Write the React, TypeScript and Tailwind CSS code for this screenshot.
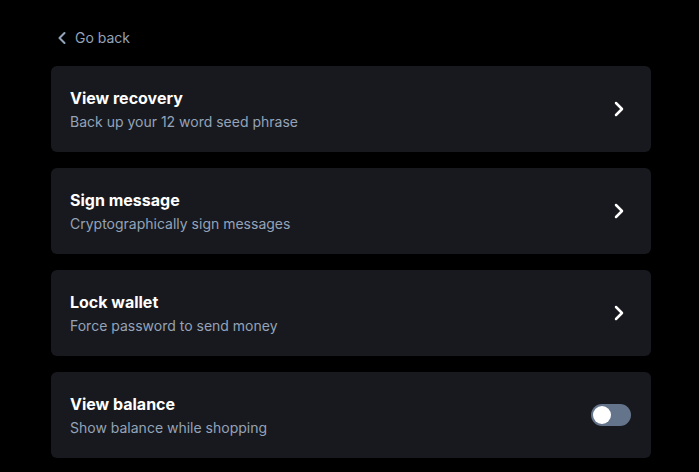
import { ChevronLeft, ChevronRight } from 'lucide-react';

const ITEMS = [
  { title: 'View recovery', description: 'Back up your 12 word seed phrase' },
  { title: 'Sign message', description: 'Cryptographically sign messages' },
  { title: 'Lock wallet', description: 'Force password to send money' },
];

function Toggle() {
  return (
    <div className="flex h-[22px] w-10 items-center rounded-full bg-[#64748b] px-[2px]">
      <div className="h-[18px] w-[18px] rounded-full bg-white" />
    </div>
  );
}

export default function App() {
  return (
    <div className="min-h-[472px] bg-black px-[51px] pt-[28px] font-['Inter',sans-serif]">
      <button className="ml-[1px] flex items-center gap-[3px] text-sm text-[#94a3b8]">
        <ChevronLeft className="h-5 w-5" strokeWidth={2.5} aria-hidden="true" />
        Go back
      </button>

      <div className="mt-[18px] flex w-[600px] flex-col gap-4">
        {ITEMS.map((item) => (
          <div key={item.title} className="flex items-center justify-between rounded-md bg-[#18191e] py-5 pr-5 pl-[19px]">
            <div className="flex flex-col gap-[2px]">
              <h3 className="text-base leading-6 font-bold text-white">{item.title}</h3>
              <p className="text-sm leading-5 text-[#94a3b8]">{item.description}</p>
            </div>
            <ChevronRight className="h-6 w-6 text-white" strokeWidth={2.5} aria-hidden="true" />
          </div>
        ))}
        <div className="flex items-center justify-between rounded-md bg-[#18191e] py-5 pr-5 pl-[19px]">
          <div className="flex flex-col gap-[2px]">
            <h3 className="text-base leading-6 font-bold text-white">View balance</h3>
            <p className="text-sm leading-5 text-[#94a3b8]">Show balance while shopping</p>
          </div>
          <Toggle />
        </div>
      </div>
    </div>
  );
}
